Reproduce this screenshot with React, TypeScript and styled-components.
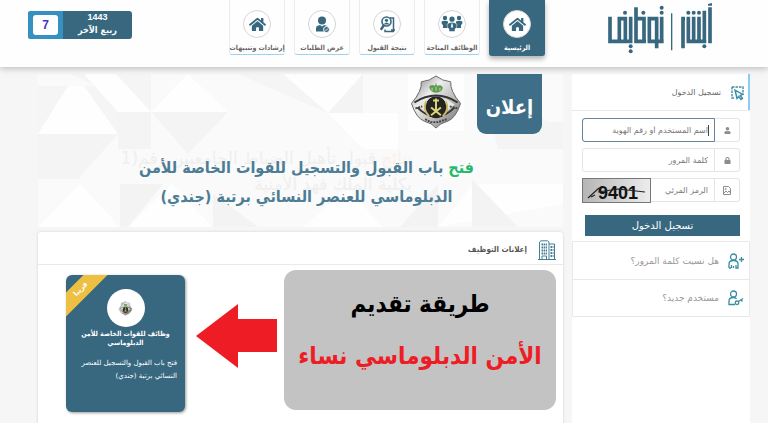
import React from "react";
import styled, { createGlobalStyle, css } from "styled-components";
import { FaHome, FaUser, FaLock } from "react-icons/fa";

const teal = "#38687f";
const iconTeal = "#3a8ca5";
const condensed = `"DejaVu Sans Condensed", "DejaVu Sans", sans-serif`;

const GlobalStyle = createGlobalStyle`
  * { box-sizing: border-box; }
  html, body { margin: 0; padding: 0; }
  body {
    background: #f6f6f6;
    font-family: "DejaVu Sans", "Noto Sans", sans-serif;
    color: #777;
  }
`;

const Page = styled.div`
  display: flex;
  flex-direction: column;
  height: 100vh;
  overflow: hidden;
`;

const Header = styled.header`
  display: flex;
  align-items: flex-start;
  justify-content: space-between;
  flex: none;
  padding: 0 56px 11px 28px;
  background: #fefefe;
  box-shadow: 0 2px 6px rgba(0, 0, 0, 0.22);
  position: relative;
  z-index: 1;
`;

const LogoLink = styled.a`
  display: block;
  margin-top: 2px;
  svg { display: block; }
`;

const Nav = styled.nav`
  display: flex;
  align-items: flex-start;
  gap: 9px;
  margin-right: 63px;
  margin-left: auto;
`;

const NavItem = styled.a<{ $active?: boolean }>`
  display: flex;
  flex-direction: column;
  align-items: center;
  gap: 4px;
  width: 56px;
  height: 55px;
  padding-top: 10px;
  border: 1px solid #ececec;
  border-top: 0;
  border-bottom: 1px solid #9bd3f0;
  border-radius: 0 0 3px 3px;
  color: #666;
  font-family: ${condensed};
  font-size: 7px;
  font-weight: 700;
  line-height: 12px;
  white-space: nowrap;
  text-decoration: none;
  ${(p) =>
    p.$active &&
    css`
      height: 56px;
      background: ${teal};
      border-color: ${teal};
      color: #fff;
      box-shadow: 0 3px 5px rgba(0, 0, 0, 0.3);
    `}
`;

const NavIcon = styled.span`
  display: grid;
  place-items: center;
  flex: none;
  width: 28px;
  height: 28px;
  border: 1px solid #d5d5d5;
  border-radius: 50%;
  background: #fff;
  color: ${teal};
`;

const DateBadge = styled.div`
  display: flex;
  flex: none;
  width: 104px;
  height: 28px;
  margin-top: 11px;
  border-radius: 3px;
  overflow: hidden;
  background: ${teal};
`;

const MonthYear = styled.div`
  display: flex;
  flex-direction: column;
  flex: 1;
  color: #fff;
  text-align: center;
  font: 700 9px/13px "Liberation Sans", sans-serif;
`;

const Month = styled.span`
  font-family: ${condensed};
`;

const DayCell = styled.div`
  display: grid;
  width: 35px;
  padding: 4px 5px;
  background: #3690c0;
`;

const Day = styled.span`
  border-radius: 3px;
  background: #fff;
  color: #3c36c8;
  text-align: center;
  font: 700 12px/20px "Liberation Sans", sans-serif;
`;

const Content = styled.div`
  display: grid;
  grid-template-columns: 178px minmax(0, 1fr);
  gap: 9px;
  flex: 1;
  min-height: 0;
  padding: 7px 18px 0 38px;
`;

const Main = styled.main`
  display: flex;
  flex-direction: column;
  gap: 5px;
  min-width: 0;
`;

const Banner = styled.section`
  position: relative;
  flex: none;
  height: 153px;
  padding: 0 21px;
  background: #fafafa;
  overflow: hidden;
`;

const Pattern = styled.svg`
  position: absolute;
  inset: 0;
  width: 100%;
  height: 100%;
`;

const BannerTop = styled.div`
  position: relative;
  display: flex;
  gap: 13px;
  height: 60px;
`;

const BannerTag = styled.h1`
  margin: 0;
  width: 65px;
  height: 60px;
  border-radius: 0 0 9px 9px;
  background: #3f6f88;
  color: #fff;
  text-align: center;
  font-family: ${condensed};
  font-size: 20px;
  font-weight: 700;
  line-height: 66px;
`;

const EmblemBox = styled.div`
  width: 56px;
  height: 57px;
  background: #fefefe;
  svg { display: block; }
`;

const GhostText = styled.p`
  position: absolute;
  top: 71px;
  right: 151px;
  margin: 0;
  color: #efefef;
  font-size: 17px;
  line-height: 26px;
  white-space: nowrap;
  span { color: #faf0ea; }
`;

const BannerText = styled.p`
  position: relative;
  margin: 19px 0 0;
  padding-left: 12px;
  color: #4d7c95;
  text-align: center;
  font-family: ${condensed};
  font-size: 16px;
  font-weight: 700;
  line-height: 29px;
  white-space: nowrap;
  span { color: #25b96e; }
`;

const Jobs = styled.section`
  flex: 1;
  min-height: 0;
  background: #fff;
  border-radius: 3px 3px 0 0;
  box-shadow: 0 0 3px rgba(0, 0, 0, 0.15);
`;

const JobsHeader = styled.header`
  display: flex;
  align-items: center;
  gap: 11px;
  height: 33px;
  padding: 4px 7px 0;
  border-bottom: 1px solid #e9e9e9;
`;

const JobsTitle = styled.h2`
  margin: 0;
  color: #555;
  font-family: ${condensed};
  font-size: 8px;
  font-weight: 700;
  line-height: 14px;
`;

const JobsBody = styled.div`
  display: flex;
  align-items: flex-start;
  gap: 7px;
  padding: 5px 7px 12px 28px;
`;

const Notice = styled.div`
  flex: 1;
  min-width: 0;
  height: 140px;
  padding-top: 8px;
  border-radius: 12px;
  background: #c3c3c3;
  text-align: center;
  font-family: ${condensed};
  font-weight: 700;
  white-space: nowrap;
`;

const NoticeLine = styled.p<{ $red?: boolean }>`
  margin: 0;
  color: ${(p) => (p.$red ? "#ee1c25" : "#000")};
  font-size: 24px;
  line-height: 52px;
`;

const Arrow = styled.svg`
  flex: none;
  width: 81px;
  height: 64px;
  margin-top: 34px;
`;

const JobCard = styled.article`
  position: relative;
  flex: none;
  width: 119px;
  height: 137px;
  margin: 5px 4px 0 0;
  padding: 14px 8px 0;
  border-radius: 6px;
  background: ${teal};
  box-shadow: 1px 1px 3px rgba(0, 0, 0, 0.4);
  color: #fff;
  overflow: hidden;
`;

const Ribbon = styled.span`
  position: absolute;
  top: 6px;
  left: -23px;
  width: 76px;
  height: 17px;
  background: #edc044;
  text-align: center;
  font-size: 7px;
  font-weight: 700;
  line-height: 16px;
  transform: rotate(-45deg);
`;

const JobEmblem = styled.div`
  display: grid;
  place-items: center;
  width: 38px;
  height: 38px;
  margin: 0 auto;
  border-radius: 50%;
  background: #fff;
`;

const JobTitle = styled.h3`
  margin: 3px 0 0;
  text-align: center;
  font-family: ${condensed};
  font-size: 7px;
  font-weight: 700;
  line-height: 9px;
`;

const JobText = styled.p`
  margin: 9px 0 0;
  font-size: 7px;
  line-height: 13px;
`;

const Sidebar = styled.aside`
  min-width: 0;
  background: #fff;
`;

const LoginHeader = styled.div`
  display: flex;
  align-items: center;
  gap: 10px;
  height: 37px;
  padding: 2px 6px 0;
  border-bottom: 1px solid #e9e9e9;
  box-shadow: inset -2px 0 #8acdf0;
`;

const LoginTitle = styled.h2`
  margin: 0;
  color: #666;
  font-size: 8px;
  font-weight: 400;
  line-height: 14px;
`;

const Form = styled.form`
  display: flex;
  flex-direction: column;
  gap: 6px;
  padding: 7px 10px 5px;
`;

const Field = styled.label`
  display: flex;
  height: 24px;
  border: 1px solid #e4e4e4;
  border-radius: 3px;
  background: #fff;
`;

const FieldIcon = styled.span`
  display: grid;
  place-items: center;
  flex: none;
  width: 24px;
  color: #8c8c8c;
`;

const Input = styled.input<{ $current?: boolean }>`
  flex: 1;
  min-width: 0;
  padding: 0 6px;
  border: 0;
  border-right: 1px solid #e4e4e4;
  outline: 0;
  background: transparent;
  color: #777;
  font: 8px "DejaVu Sans", sans-serif;
  &::placeholder { color: #777; opacity: 1; }
  ${(p) =>
    p.$current &&
    css`
      margin: -1px 0 -1px -1px;
      border: 1px solid #66859a;
      border-radius: 3px 0 0 3px;
      background: linear-gradient(#444, #444) right 5px center / 1px 11px no-repeat;
    `}
`;

const Captcha = styled.svg`
  flex: none;
  width: 69px;
  height: 25px;
  margin: -1px 0 -1px -1px;
`;

const Submit = styled.button`
  height: 21px;
  margin: 7px 0 0 3px;
  padding: 0;
  border: 0;
  background: ${teal};
  color: #fff;
  font: 10px/20px "DejaVu Sans", sans-serif;
`;

const SideLink = styled.a`
  display: flex;
  align-items: center;
  gap: 9px;
  height: 38px;
  padding: 0 5px;
  border: 1px solid #e9e9e9;
  border-bottom-width: 0;
  color: #999;
  font-size: 9px;
  text-decoration: none;
  &:last-child { border-bottom-width: 1px; }
`;

const Logo = () => (
  <svg width="104" height="52" viewBox="84 4 312 156" fill="none" stroke={teal} strokeWidth="11" role="img" aria-label="أبشر توظيف">
    <path d="M90 48V122H157M152 48V128M118 122V54H136V128M168 20V122H198M168 54H192V128M229 122H208V54H230V143M225 122H251M245 48V128" />
    <path d="M275 38V149" strokeWidth="4" />
    <path d="M309 143V54H315M325 48V128M341 48V128M357 48V128M373 30V128M320 122H379M390 20V128" />
    <path d="M384 15V10L396 7V15Z" fill={teal} stroke="none" />
    <g fill={teal} stroke="none">
      {[[135, 36], [152, 137], [152, 152], [190, 36], [245, 21], [245, 36], [325, 36], [341, 36], [357, 36], [373, 137]].map(([x, y]) => (
        <circle key={`${x}-${y}`} cx={x} cy={y} r="6" />
      ))}
    </g>
  </svg>
);

const TeamIcon = () => (
  <svg width="22" height="18" viewBox="0 0 22 18" fill="currentColor">
    <circle cx="4" cy="3" r="2.2" /><circle cx="18" cy="3" r="2.2" /><circle cx="11" cy="4.2" r="2.6" />
    <path d="M0.5 6.5Q4 4.8 7 6.6V13H2V10Q.3 9.5.5 6.5ZM21.5 6.5Q18 4.8 15 6.6V13H20V10Q21.7 9.5 21.5 6.5Z" />
    <path d="M6 9Q11 5.5 16 9L15.5 12.5 14 14V16.5H8V14L6.5 12.5Z" stroke="#fff" strokeWidth=".5" />
    <path d="M10.5 8.5h1l.5 3.5-1 1-1-1Z" fill="#fff" />
  </svg>
);

const ResultIcon = () => (
  <svg width="15" height="17" viewBox="0 0 15 17" fill="none" stroke="currentColor">
    <path d="M10 2H13.5V15.5H5V13.5M11 14H15" strokeWidth="1.5" />
    <circle cx="6.5" cy="5.5" r="4.500" strokeWidth="1.600" />
    <path d="M4 9L.8 13.8" strokeWidth="2.400" />
    <circle cx="6.5" cy="4.3" r="1.600" fill="currentColor" stroke="none" />
    <path d="M3.500 8.500Q6.500 4.500 9.500 8.500Z" fill="currentColor" stroke="none" />
  </svg>
);

const ApplicantIcon = () => (
  <svg width="15" height="17" viewBox="0 0 15 17" fill="currentColor">
    <circle cx="7" cy="4.5" r="4" />
    <path d="M1 15.5V12Q1 9.8 3.5 9.4L5 9 7 10.5 9 9 11 9.5Q13 10 13 12V15.5Z" />
    <circle cx="11.5" cy="13.5" r="3" stroke="#fff" />
    <path d="M10 13.5l1 1 2-2" fill="none" stroke="#fff" />
  </svg>
);

const Emblem = ({ size }: { size: number }) => (
  <svg width={size} height={size} viewBox="0 0 56 57">
    <defs>
      <linearGradient id="steel" x2="1" y2="1">
        <stop stopColor="#777" /><stop offset=".35" stopColor="#eee" /><stop offset=".65" stopColor="#b8b8b8" /><stop offset="1" stopColor="#666" />
      </linearGradient>
    </defs>
    <path d="M28 2Q34 7 43 8Q42 17 53 30Q48 45 40 48Q32 50 28 55Q24 50 16 48Q8 45 3 30Q14 17 13 8Q22 7 28 2Z" fill="url(#steel)" stroke="#666" />
    <path d="M9 31Q28 17 47 31Q28 50 9 31Z" fill="#e9e8df" />
    <path d="M6 29Q28 15 50 29M9 34Q28 53 47 34" fill="none" stroke="#333" strokeWidth="2" />
    <circle cx="28" cy="34" r="11" fill="#242521" />
    <path d="M18 28Q14 36 21 43M38 28Q42 36 35 43" fill="none" stroke="#c9b865" strokeWidth="2" />
    <path d="M28 25V39M25 27H31M23 34L33 42M33 34L23 42" stroke="#ddd47b" strokeWidth="2" />
    <path d="M21 13Q23 10 27 12L28 9 29 12Q34 10 35 14Q34 19 28 19Q22 19 21 13Z" fill="#5a9c55" />
    <path d="M24 14V17M28 13V17M32 14V17" stroke="#dcd87c" />
    <path d="M7 35L14 33M42 33L50 35M17 46L23 49 30 49 39 46" stroke="#444" strokeWidth="2" strokeDasharray="2 1" fill="none" />
  </svg>
);

const BuildingIcon = () => (
  <svg width="18" height="20" viewBox="0 0 18 20" fill="none" stroke="#477e97">
    <path d="M1.5 19V2L3 .8H9.5L11 2V19M11 4H16.5V19M0 19.5H18" />
    <path d="M3.5 4.5H9M3.5 7.5H9M3.5 10.5H9M3.5 13.5H9M12.5 7H15.5M12.5 10H15.5M12.5 13H15.5M12.5 16H15.5" strokeWidth="1.8" strokeDasharray="1.500 .6" />
    <path d="M4 19V16H8.5V19" />
  </svg>
);

const SelectIcon = () => (
  <svg width="13" height="15" viewBox="0 0 13 15" fill="none" stroke={iconTeal} strokeWidth="1.4">
    <path d="M1 1H12V9M1 1V12H4" strokeDasharray="2.500 1" />
    <path d="M4 4L6 12.5 7.8 10.5 10 13.5 11.5 12.3 9.3 9.5 11.8 8.3Z" fill="#eaf7fa" />
  </svg>
);

const PersonIcon = ({ mark }: { mark: "plus" | "key" }) => (
  <svg width="16" height="16" viewBox="0 0 16 16" fill="none" stroke={iconTeal} strokeWidth="1.3">
    <circle cx="5.5" cy="4" r="3" />
    {mark === "plus" ? (
      <path d="M1 15V11Q1 7.5 5.5 7.5T10 11V15H8V12M3.500 15V12M1 15H3M11 6.5H16M13.5 4V9M5.500 13V15" />
    ) : (
      <>
        <path d="M7 14.5H1V11Q1 7.5 5.5 7.5Q7.5 7.5 8.5 9" />
        <circle cx="9" cy="12.8" r="1.8" />
        <path d="M10.5 11.5L15 8.5M13 10L14.5 11.5" />
      </>
    )}
  </svg>
);

const PictureIcon = () => (
  <svg width="8" height="9" viewBox="0 0 8 9" fill="none" stroke="currentColor">
    <path d="M.5.5H5.5L7.5 2.5V8.5H.5ZM1 7L3 5 4.5 6.5 6 5 7.5 7" /><circle cx="2.7" cy="3" r=".6" />
  </svg>
);

const navItems = [
  { label: "الرئيسية", icon: <FaHome size={17} />, active: true },
  { label: "الوظائف المتاحة", icon: <TeamIcon /> },
  { label: "نتيجة القبول", icon: <ResultIcon /> },
  { label: "عرض الطلبات", icon: <ApplicantIcon /> },
  { label: "إرشادات وتنبيهات", icon: <FaHome size={17} /> },
];

export default function App() {
  return (
    <Page dir="rtl" lang="ar">
      <GlobalStyle />
      <Header>
        <LogoLink href="#"><Logo /></LogoLink>
        <Nav>
          {navItems.map((item) => (
            <NavItem key={item.label} href="#" $active={item.active}>
              <NavIcon>{item.icon}</NavIcon>
              {item.label}
            </NavItem>
          ))}
        </Nav>
        <DateBadge>
          <MonthYear><span>1443</span><Month>ربيع الآخر</Month></MonthYear>
          <DayCell><Day>7</Day></DayCell>
        </DateBadge>
      </Header>
      <Content>
        <Sidebar>
          <LoginHeader><SelectIcon /><LoginTitle>تسجيل الدخول</LoginTitle></LoginHeader>
          <Form>
            <Field>
              <FieldIcon><FaUser size={7} /></FieldIcon>
              <Input $current aria-label="اسم المستخدم أو رقم الهوية" placeholder="اسم المستخدم أو رقم الهوية" />
            </Field>
            <Field>
              <FieldIcon><FaLock size={7} /></FieldIcon>
              <Input type="password" aria-label="كلمة المرور" placeholder="كلمة المرور" />
            </Field>
            <Field>
              <FieldIcon><PictureIcon /></FieldIcon>
              <Input aria-label="الرمز المرئي" placeholder="الرمز المرئي" />
              <Captcha viewBox="0 0 69 25">
                <defs><linearGradient id="captcha"><stop stopColor="#b5b5b5" /><stop offset="1" stopColor="#ededed" /></linearGradient></defs>
                <rect x=".5" y=".5" width="68" height="24" fill="url(#captcha)" stroke="#777" />
                <text x="36" y="21" direction="ltr" textAnchor="middle" fontFamily="Liberation Sans Narrow, Liberation Sans, sans-serif" fontSize="18" fontWeight="700" fill="#111">9401</text>
                <path d="M6 20L17 10M9 19L13 17M16 14L36 11 63 14" stroke="#222" fill="none" strokeWidth="1.2" />
              </Captcha>
            </Field>
            <Submit type="button">تسجيل الدخول</Submit>
          </Form>
          <SideLink href="#"><PersonIcon mark="plus" />هل نسيت كلمة المرور؟</SideLink>
          <SideLink href="#"><PersonIcon mark="key" />مستخدم جديد؟</SideLink>
        </Sidebar>
        <Main>
          <Banner>
            <Pattern viewBox="0 0 525 153" preserveAspectRatio="none">
              <path d="M32 0H113V38ZM200 0H325L290 39ZM0 12H80V60H0Z" fill="#f5f5f5" />
              <path d="M0 60L30 12H46L80 60ZM80 38L46 0H78L113 38ZM113 38L150 0L190 38ZM245 0H325L290 39ZM290 39L325 75H360V39Z" fill="#fefefe" />
              <path d="M0 60H80L40 105H0ZM80 38H190L150 80 113 38V75H80ZM290 39L325 0V39ZM442 0L510 48H525V75H460Z" fill="#f4f4f4" />
              <path d="M0 153L42 110 82 153ZM90 153L133 110 175 153ZM265 153L310 115 345 153ZM400 153L435 110H525V130Z" fill="#fefefe" />
              <path d="M82 110L125 110 90 153H82ZM175 120V153H220ZM400 110L362 153H400ZM434 105V153H480Z" fill="#f3f3f3" />
            </Pattern>
            <GhostText aria-hidden="true"><span>نتائج</span> قبول تأهيل الضباط الجامعيين رقم(1<br />بكلية الملك فهد الأمنية</GhostText>
            <BannerTop>
              <BannerTag>إعلان</BannerTag>
              <EmblemBox><Emblem size={56} /></EmblemBox>
            </BannerTop>
            <BannerText><span>فتح</span> باب القبول والتسجيل للقوات الخاصة للأمن<br />الدبلوماسي للعنصر النسائي برتبة (جندي)</BannerText>
          </Banner>
          <Jobs>
            <JobsHeader><BuildingIcon /><JobsTitle>إعلانات التوظيف</JobsTitle></JobsHeader>
            <JobsBody>
              <Notice>
                <NoticeLine>طريقة تقديم</NoticeLine>
                <NoticeLine $red>الأمن الدبلوماسي نساء</NoticeLine>
              </Notice>
              <Arrow viewBox="0 0 81 64"><path d="M0 32L42 0V15H81V48H42V64Z" fill="#ee1c25" /></Arrow>
              <JobCard>
                <Ribbon>قريبا</Ribbon>
                <JobEmblem><Emblem size={15} /></JobEmblem>
                <JobTitle>وظائف للقوات الخاصة للأمن الدبلوماسي</JobTitle>
                <JobText>فتح باب القبول والتسجيل للعنصر النسائي برتبة (جندي)</JobText>
              </JobCard>
            </JobsBody>
          </Jobs>
        </Main>
      </Content>
    </Page>
  );
}
